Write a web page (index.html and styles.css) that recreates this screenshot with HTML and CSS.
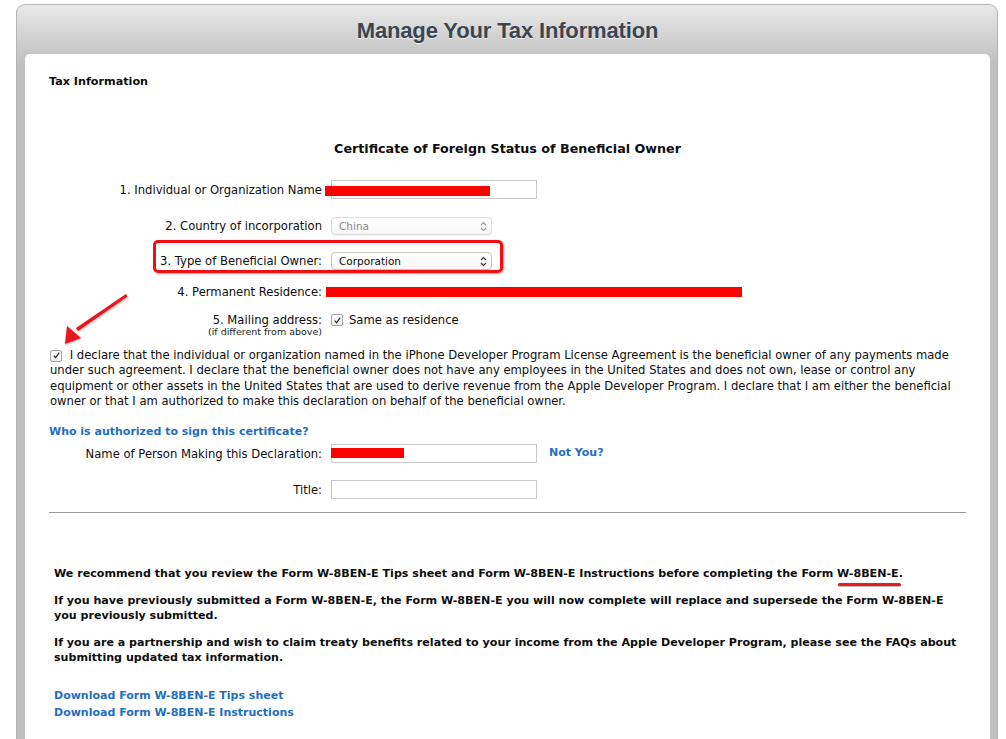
FILE: index.html
```html
<!DOCTYPE html>
<html>
<head>
<meta charset="utf-8">
<title>Manage Your Tax Information</title>
<link rel="stylesheet" href="styles.css">
</head>
<body>
<div class="panel">
  <div class="panel-head">
    <h1 class="title">Manage Your Tax Information</h1>
  </div>
  <div class="inner">
    <div class="section-label">Tax Information</div>
    <h2 class="cert-title">Certificate of Foreign Status of Beneficial Owner</h2>

    <div class="form">
      <div class="row row-1">
        <div class="label">1. Individual or Organization Name</div>
        <div class="field">
          <div class="textbox"></div>
          <div class="redact redact-1"></div>
        </div>
      </div>

      <div class="row row-2">
        <div class="label">2. Country of incorporation</div>
        <div class="field">
          <div class="select disabled"><span>China</span>
            <svg class="chev" width="7" height="11" viewBox="0 0 7 11"><path d="M1 4 L3.5 1.5 L6 4 M1 7 L3.5 9.5 L6 7" fill="none" stroke="#9a9a9a" stroke-width="1.1"/></svg>
          </div>
        </div>
      </div>

      <div class="row row-3">
        <div class="label">3. Type of Beneficial Owner:</div>
        <div class="field">
          <div class="select"><span>Corporation</span>
            <svg class="chev" width="7" height="11" viewBox="0 0 7 11"><path d="M1 4 L3.5 1.5 L6 4 M1 7 L3.5 9.5 L6 7" fill="none" stroke="#333" stroke-width="1.1"/></svg>
          </div>
        </div>
        <div class="annot-box"></div>
      </div>

      <div class="row row-4">
        <div class="label">4. Permanent Residence:</div>
        <div class="field">
          <div class="redact redact-4"></div>
        </div>
      </div>

      <div class="row row-5">
        <div class="label">5. Mailing address:<div class="sub">(if different from above)</div></div>
        <div class="field check-field">
          <span class="checkbox"><svg width="9" height="9" viewBox="0 0 9 9"><path d="M1.8 4.6 L3.6 6.8 L7.2 1.6" fill="none" stroke="#222" stroke-width="1.2"/></svg></span>
          <span>Same as residence</span>
        </div>
      </div>
    </div>

    <div class="declare">
      <span class="checkbox"><svg width="9" height="9" viewBox="0 0 9 9"><path d="M1.8 4.6 L3.6 6.8 L7.2 1.6" fill="none" stroke="#222" stroke-width="1.2"/></svg></span>
      I declare that the individual or organization named in the iPhone Developer Program License Agreement is the beneficial owner of any payments made under such agreement. I declare that the beneficial owner does not have any employees in the United States and does not own, lease or control any equipment or other assets in the United States that are used to derive revenue from the Apple Developer Program. I declare that I am either the beneficial owner or that I am authorized to make this declaration on behalf of the beneficial owner.
      <svg class="arrow" width="80" height="60" viewBox="0 0 80 60">
        <defs>
          <filter id="sh" x="-20%" y="-20%" width="140%" height="140%">
            <feDropShadow dx="0.5" dy="1" stdDeviation="0.8" flood-color="#000" flood-opacity="0.35"/>
          </filter>
        </defs>
        <g filter="url(#sh)">
          <path d="M76 3 L77.5 5.5 L28 40 L26 37 Z" fill="#e8141c"/>
          <path d="M15 53 L17 35 L31 47 Z" fill="#e8141c"/>
        </g>
      </svg>
    </div>

    <a class="link who" href="#">Who is authorized to sign this certificate?</a>

    <div class="form form-sign">
      <div class="row row-name">
        <div class="label">Name of Person Making this Declaration:</div>
        <div class="field">
          <div class="textbox"></div>
          <div class="redact redact-name"></div>
        </div>
        <a class="link notyou" href="#">Not You?</a>
      </div>
      <div class="row row-title">
        <div class="label">Title:</div>
        <div class="field"><div class="textbox"></div></div>
      </div>
    </div>

    <hr class="rule">

    <div class="notes">
      <p>We recommend that you review the Form W-8BEN-E Tips sheet and Form W-8BEN-E Instructions before completing the Form <span class="underlined">W-8BEN-E<span class="uline"></span></span>.</p>
      <p>If you have previously submitted a Form W-8BEN-E, the Form W-8BEN-E you will now complete will replace and supersede the Form W-8BEN-E you previously submitted.</p>
      <p>If you are a partnership and wish to claim treaty benefits related to your income from the Apple Developer Program, please see the FAQs about submitting updated tax information.</p>
    </div>

    <div class="downloads">
      <a class="link" href="#">Download Form W-8BEN-E Tips sheet</a>
      <a class="link" href="#">Download Form W-8BEN-E Instructions</a>
    </div>
  </div>
</div>
</body>
</html>
```

FILE: styles.css
```css
html, body {
  margin: 0;
  padding: 0;
  background: #ffffff;
  height: 100%;
  overflow: hidden;
}

body {
  font-family: "DejaVu Sans", "Liberation Sans", sans-serif;
  font-size: 11.6px;
  color: #0d0d0d;
}

.panel {
  margin: 4px 0 0 16px;
  width: 982px;
  height: calc(100vh - 4px);
  border: 1px solid #b4b4b4;
  border-bottom: none;
  border-radius: 9px 9px 0 0;
  background: linear-gradient(to bottom, #e9e9e9 0px, #c6c6c6 48px, #bfbfbf 60px, #bfbfbf 100%);
  padding: 0 7px 0 8px;
  box-sizing: border-box;
  overflow: hidden;
}

.panel-head {
  height: 49px;
  display: flex;
  align-items: center;
  justify-content: center;
}

.title {
  margin: 3px 0 0 0;
  font-family: "Liberation Sans", Arial, sans-serif;
  font-weight: bold;
  font-size: 22px;
  letter-spacing: -0.15px;
  color: #3a4551;
  text-shadow: 0 1px 0 rgba(255,255,255,0.7);
}

.inner {
  background: #ffffff;
  border-radius: 5px 5px 0 0;
  height: 720px;
  padding: 20px 24px 0 24px;
  position: relative;
}

.section-label {
  font-weight: bold;
  font-size: 11.2px;
  line-height: 16px;
}

.cert-title {
  margin: 50px 0 0 0;
  text-align: center;
  font-size: 12.7px;
  line-height: 18px;
  font-weight: bold;
}

.form {
  display: flex;
  flex-direction: column;
}

.row {
  display: flex;
  align-items: center;
  position: relative;
}

.label {
  width: 273px;
  text-align: right;
  line-height: 16px;
  flex: none;
}

.label .sub {
  font-size: 9.5px;
  line-height: 12px;
  margin-top: -2px;
  color: #222;
}

.field {
  margin-left: 9px;
  position: relative;
  display: flex;
  align-items: center;
}

.textbox {
  width: 204px;
  height: 17px;
  border: 1px solid #c9c9c9;
  background: #fff;
}

.select {
  width: 148px;
  height: 16px;
  border: 1px solid #c4c4c4;
  border-radius: 4px;
  background: linear-gradient(#ffffff, #f6f6f6);
  display: flex;
  align-items: center;
  justify-content: space-between;
  padding: 0 4px 0 7px;
  font-size: 10.5px;
  box-shadow: 0 1px 0 rgba(0,0,0,0.06);
}

.select.disabled {
  color: #8a8a8a;
  border-color: #dcdcdc;
}

.chev { display: block; }

.redact {
  position: absolute;
  background: #ff0000;
}

.redact-1 { left: -6px; top: 6px; width: 165px; height: 10px; }
.redact-4 { left: -5px; top: -5px; width: 416px; height: 10px; }
.redact-name { left: 0; top: 4px; width: 73px; height: 10px; }

.row-1 { margin-top: 22px; }
.row-2 { margin-top: 18px; }
.row-3 { margin-top: 17px; }
.row-4 { margin-top: 14px; height: 16px; }
.row-5 { margin-top: 12px; align-items: flex-start; }

.check-field {
  gap: 6px;
  line-height: 16px;
}

.checkbox {
  width: 10px;
  height: 10px;
  border: 1px solid #a3a3a3;
  border-radius: 2px;
  background: linear-gradient(#ffffff, #f0f0f0);
  display: inline-flex;
  align-items: center;
  justify-content: center;
  flex: none;
}

.annot-box {
  position: absolute;
  left: 104px;
  top: -12px;
  width: 344px;
  height: 27px;
  border: 3px solid #f20d12;
  border-radius: 5px;
  box-shadow: 1px 1px 2px rgba(0,0,0,0.35);
  pointer-events: none;
}

.declare {
  margin-top: 10px;
  line-height: 15.3px;
  position: relative;
  padding-left: 1px;
}

.declare .checkbox {
  vertical-align: -1px;
  margin-right: 4px;
}

.arrow {
  position: absolute;
  left: 1px;
  top: -57px;
}

.link {
  color: #1f6fbf;
  font-weight: bold;
  text-decoration: none;
  font-size: 11px;
}

.who {
  display: block;
  margin-top: 15px;
  line-height: 16px;
}

.form-sign { margin-top: 4px; }

.notyou {
  margin-left: 12px;
  margin-top: -2px;
}

.row-title { margin-top: 17px; }

.rule {
  margin: 13px 0 0 0;
  border: none;
  border-top: 1px solid #9a9a9a;
  width: 917px;
}

.notes {
  margin-top: 53px;
  padding-left: 5px;
  font-weight: bold;
  font-size: 11.1px;
}

.notes p {
  margin: 0 0 12px 0;
  line-height: 15px;
}

.underlined {
  position: relative;
}

.uline {
  position: absolute;
  left: 1px;
  right: -2px;
  bottom: -6px;
  height: 3px;
  border-radius: 2px;
  background: #ee1a1a;
  box-shadow: 0 1px 1px rgba(0,0,0,0.3);
}

.downloads {
  margin-top: 22px;
  padding-left: 5px;
  display: flex;
  flex-direction: column;
  line-height: 17px;
}
```
